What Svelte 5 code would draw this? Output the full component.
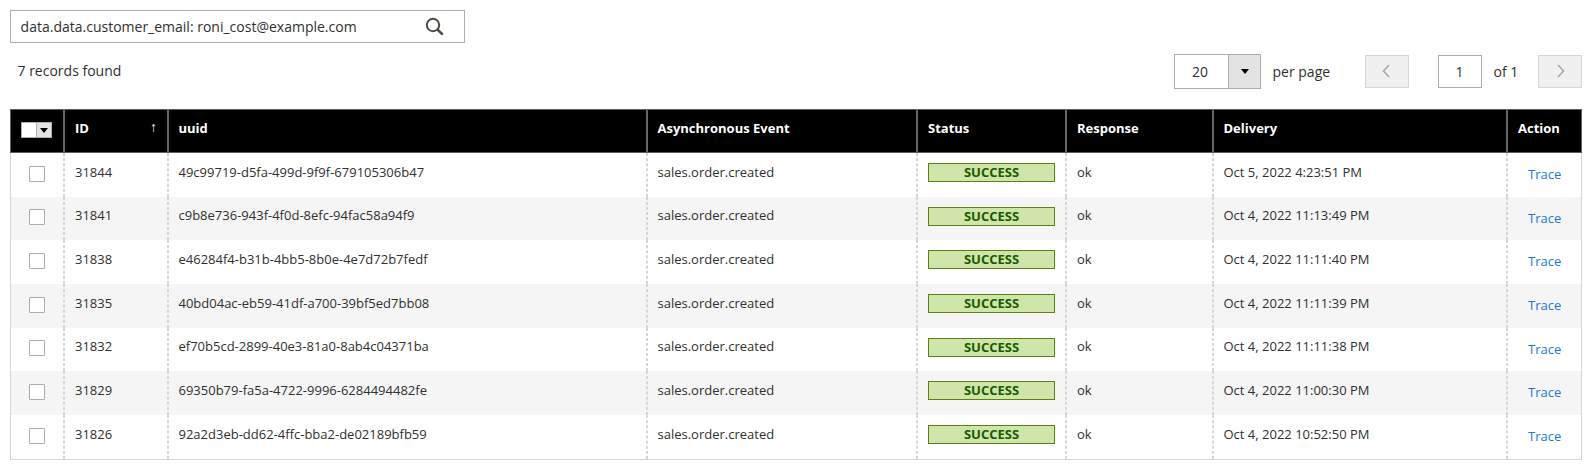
<script>
  const rows = [
    { id: '31844', uuid: '49c99719-d5fa-499d-9f9f-679105306b47', date: 'Oct 5, 2022 4:23:51 PM' },
    { id: '31841', uuid: 'c9b8e736-943f-4f0d-8efc-94fac58a94f9', date: 'Oct 4, 2022 11:13:49 PM' },
    { id: '31838', uuid: 'e46284f4-b31b-4bb5-8b0e-4e7d72b7fedf', date: 'Oct 4, 2022 11:11:40 PM' },
    { id: '31835', uuid: '40bd04ac-eb59-41df-a700-39bf5ed7bb08', date: 'Oct 4, 2022 11:11:39 PM' },
    { id: '31832', uuid: 'ef70b5cd-2899-40e3-81a0-8ab4c04371ba', date: 'Oct 4, 2022 11:11:38 PM' },
    { id: '31829', uuid: '69350b79-fa5a-4722-9996-6284494482fe', date: 'Oct 4, 2022 11:00:30 PM' },
    { id: '31826', uuid: '92a2d3eb-dd62-4ffc-bba2-de02189bfb59', date: 'Oct 4, 2022 10:52:50 PM' }
  ];
</script>

<main>
  <div class="search">
    <span>data.data.customer_email: roni_cost@example.com</span>
    <svg width="20" height="20" viewBox="0 0 20 20" fill="none" stroke="#514943">
      <circle cx="8" cy="8" r="6.2" stroke-width="2" />
      <path d="M12.3 12.3L17.7 17.7" stroke-width="2.6" />
    </svg>
  </div>

  <div class="toolbar">
    <div class="found">7 records found</div>
    <div class="select">
      <span>20</span>
      <i><svg width="8" height="5" viewBox="0 0 8 5"><path d="M0 0H8L4 5Z" /></svg></i>
    </div>
    <span class="per">per page</span>
    <button class="nav" aria-label="Previous"><svg width="8" height="14" viewBox="0 0 8 14"><path d="M7 1L1.5 7L7 13" /></svg></button>
    <div class="page">1</div>
    <span class="of">of 1</span>
    <button class="nav" aria-label="Next"><svg width="8" height="14" viewBox="0 0 8 14"><path d="M1 1L6.5 7L1 13" /></svg></button>
  </div>

  <div class="table">
    <div class="row head">
      <div class="multi"><div class="multibox"><b></b><i><svg width="8" height="5" viewBox="0 0 8 5"><path d="M0 0H8L4 5Z" /></svg></i></div></div>
      <div class="sorted"><span>ID</span><span class="arrow">↑</span></div>
      <div class="shifted">uuid</div>
      <div class="shifted">Asynchronous Event</div>
      <div>Status</div>
      <div>Response</div>
      <div class="shifted">Delivery</div>
      <div>Action</div>
    </div>
    <div class="body">
      {#each rows as row}
        <div class="row">
          <div class="check"><b></b></div>
          <div>{row.id}</div>
          <div class="shifted">{row.uuid}</div>
          <div class="shifted">sales.order.created</div>
          <div class="status"><span>SUCCESS</span></div>
          <div>ok</div>
          <div class="shifted">{row.date}</div>
          <div class="action"><a href="#trace">Trace</a></div>
        </div>
      {/each}
    </div>
  </div>
</main>

<style>
  :global(body) {
    margin: 0;
    background: #fff;
  }
  main {
    box-sizing: border-box;
    width: 1596px;
    height: 474px;
    padding: 10px 14px 0 10px;
    font: 14px/19px "Open Sans", sans-serif;
    color: #303030;
  }
  main * {
    box-sizing: border-box;
  }
  svg {
    display: block;
  }
  .search {
    display: flex;
    align-items: center;
    justify-content: space-between;
    width: 455px;
    height: 33px;
    padding: 0 19px 0 9.6px;
    border: 1px solid #adadad;
  }
  .toolbar {
    display: flex;
    align-items: flex-start;
    height: 66px;
    padding-top: 11px;
  }
  .found {
    flex: 1;
    padding: 7px 0 0 7.5px;
  }
  .select {
    display: flex;
    width: 87px;
    height: 35px;
    border: 1px solid #adadad;
    line-height: 34px;
  }
  .select span {
    width: 53px;
    padding-left: 17px;
  }
  .select i {
    display: grid;
    place-items: center;
    flex: 1;
    border-left: 1px solid #adadad;
    background: #e3e3e3;
  }
  .per {
    width: 104px;
    padding: 8px 0 0 11.5px;
  }
  .nav {
    display: grid;
    place-items: center;
    width: 44px;
    height: 33px;
    margin-top: 1px;
    padding: 0 3px 2px 0;
    border: 1px solid #d6d6d6;
    background: #f0f0f0;
  }
  .of + .nav {
    padding: 0 0 2px 2px;
  }
  .nav svg {
    fill: none;
    stroke: #a6a6a6;
    stroke-width: 1.5;
  }
  .page {
    width: 44px;
    height: 33px;
    margin: 1px 0 0 29px;
    padding-right: 1px;
    border: 1px solid #adadad;
    line-height: 32px;
    text-align: center;
  }
  .of {
    width: 56px;
    padding: 8px 0 0 11.5px;
  }
  .table {
    width: 1572px;
    font-size: 13px;
    line-height: 18px;
  }
  .row {
    display: grid;
    grid-template-columns: 53px 104px 479px 270px 149px 147px 294px 1fr;
    height: 43.667px;
  }
  .row > div {
    padding: 9.667px 0 0 10px;
    border: dashed #d6d6d6;
    border-width: 0 1px;
  }
  .row > .shifted {
    padding-left: 9.5px;
  }
  .row > div:first-child {
    border-left: 0;
  }
  .row > div:last-child {
    border-right: 0;
  }
  .head.row {
    height: 44px;
    border: 1px solid #5f5d5d;
    background: #000;
    color: #fff;
    font-weight: 700;
  }
  .head.row > div {
    padding-top: 9px;
    border-style: solid;
    border-color: #666;
  }
  .head .sorted {
    display: flex;
    justify-content: space-between;
    padding-right: 10px;
  }
  .arrow {
    font-size: 14px;
    font-weight: 400;
    line-height: 16px;
  }
  .head.row > .multi {
    padding-top: 12px;
  }
  .multibox {
    display: flex;
    width: 31px;
    height: 16px;
    border: 1px solid #adadad;
    background: #fff;
  }
  .multibox b {
    width: 14px;
  }
  .multibox i {
    display: grid;
    place-items: center;
    flex: 1;
    border-left: 1px solid #adadad;
    background: #e3e3e3;
  }
  .body {
    height: 307px;
    border: solid #d6d6d6;
    border-width: 0 1px 1px;
  }
  .row:nth-child(even) {
    background: #f5f5f5;
  }
  .body .check {
    padding: 12.667px 0 0 18px;
  }
  .check b {
    display: block;
    width: 16px;
    height: 16px;
    border: 1px solid #adadad;
    border-radius: 1px;
    background: #fff;
  }
  .body .status {
    padding-top: 10px;
  }
  .status span {
    display: block;
    width: 127px;
    height: 19px;
    border: 1px solid #5b8116;
    background: #d0e5a9;
    color: #185b00;
    font-weight: 700;
    line-height: 17px;
    text-align: center;
  }
  .body .action {
    padding: 12px 0 0 20px;
  }
  a {
    color: #1979d4;
    text-decoration: none;
  }
</style>
